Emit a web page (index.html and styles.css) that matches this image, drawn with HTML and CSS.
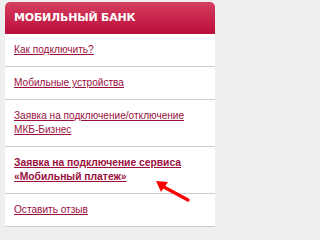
FILE: index.html
```html
<!DOCTYPE html>
<html lang="ru">
<head>
<meta charset="utf-8">
<link rel="stylesheet" href="styles.css">
</head>
<body>
<div class="card">
  <div class="head">МОБИЛЬНЫЙ БАНК</div>
  <ul class="menu">
    <li><a href="#">Как подключить?</a></li>
    <li><a href="#">Мобильные устройства</a></li>
    <li><a href="#">Заявка на подключение/отключение МКБ-Бизнес</a></li>
    <li><a href="#" class="strong">Заявка на подключение сервиса «Мобильный платеж»</a></li>
    <li><a href="#">Оставить отзыв</a></li>
  </ul>
  <svg class="arrow" width="40" height="26" viewBox="0 0 40 26">
    <line x1="35" y1="21" x2="9" y2="7" stroke="#f00" stroke-width="3.2" stroke-linecap="round"/>
    <polygon points="3,2 15,3 8,13" fill="#f00"/>
  </svg>
</div>
</body>
</html>
```
FILE: styles.css
```css
html, body {
  margin: 0;
  padding: 0;
  background: #eeeeee;
}
body {
  font-family: "DejaVu Sans", Verdana, sans-serif;
}
.card {
  position: relative;
  width: 210px;
  margin: 2px 0 0 5px;
  background: #ffffff;
  border-radius: 5px 5px 0 0;
}
.head {
  height: 32px;
  line-height: 32px;
  padding-left: 9px;
  border-radius: 5px 5px 0 0;
  background: linear-gradient(#d5405f, #bb0c3b);
  color: #ffffff;
  font-weight: bold;
  font-size: 11px;
  letter-spacing: -0.2px;
}
.menu {
  list-style: none;
  margin: 0;
  padding: 0;
}
.menu li {
  padding: 9px 8px 9px 9px;
  border-bottom: 1px solid #cccccc;
  font-family: "Liberation Sans", Arial, sans-serif;
  font-size: 10.1px;
  line-height: 14px;
}
.menu a {
  color: #9a0f3e;
  text-decoration: underline;
}
.menu a.strong {
  font-size: 10.3px;
  font-weight: bold;
}
.arrow {
  position: absolute;
  left: 148px;
  top: 177px;
}
```
